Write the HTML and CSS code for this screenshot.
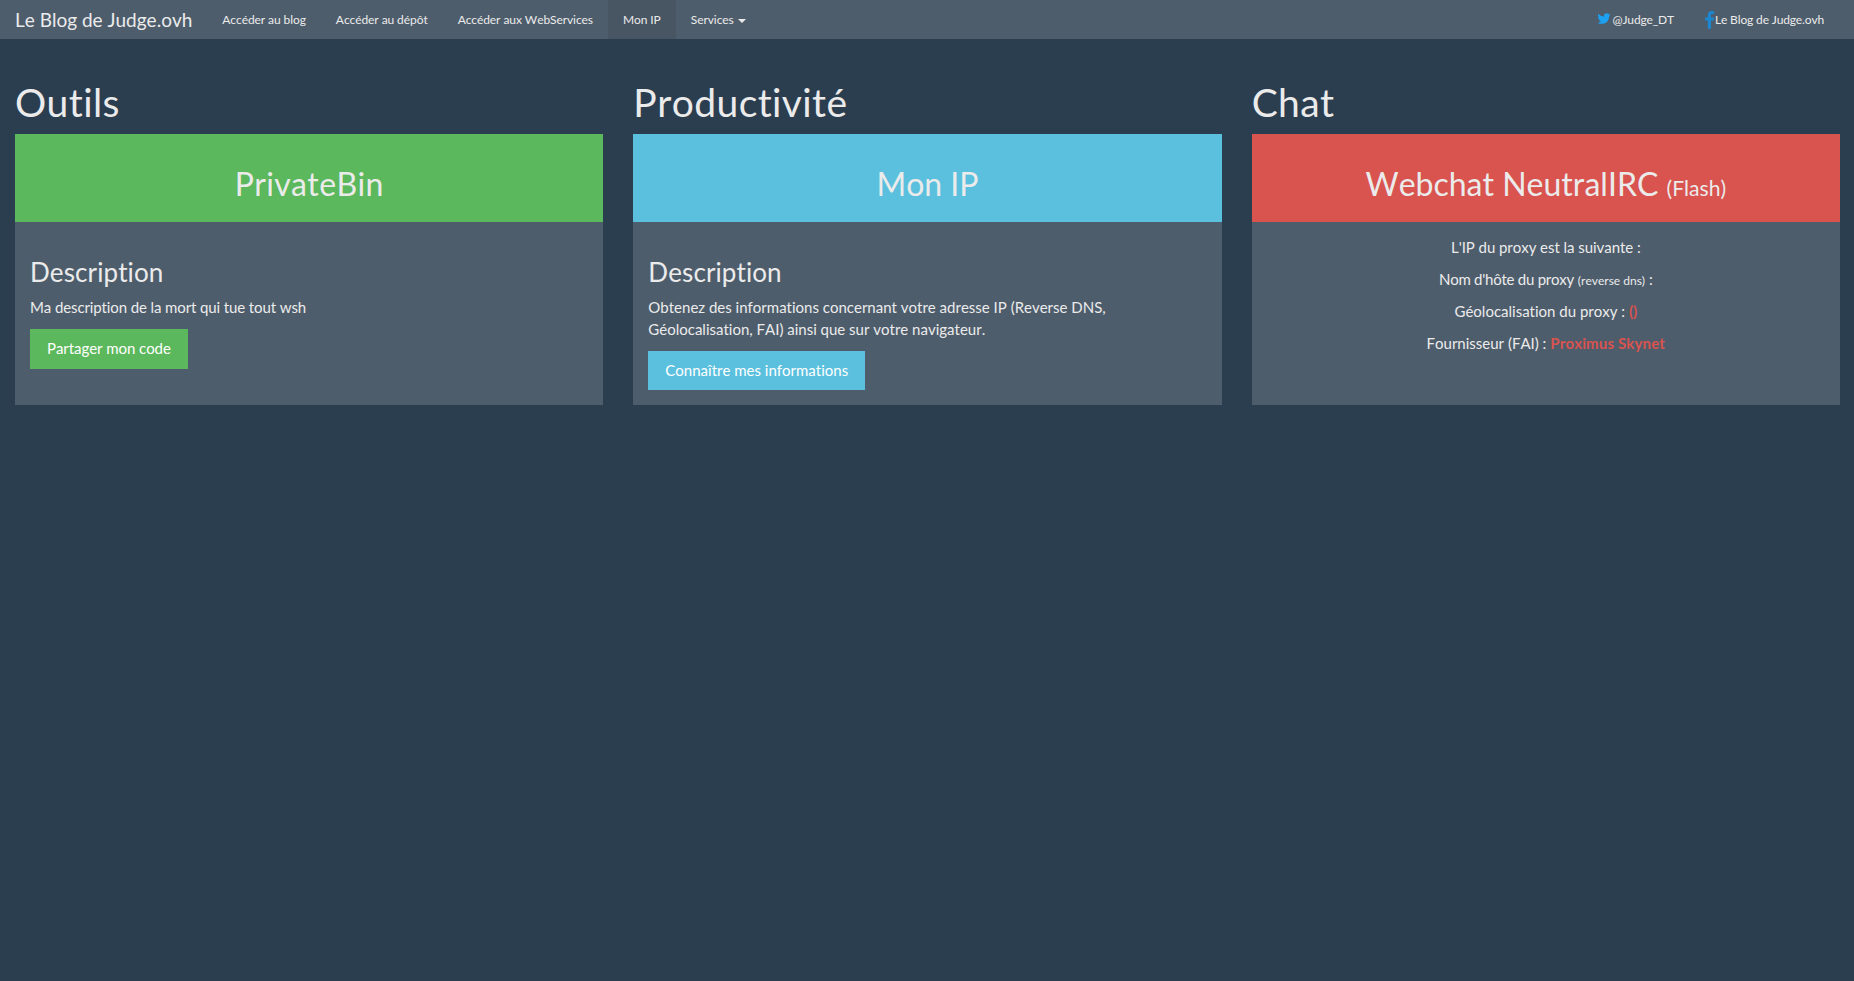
FILE: index.html
```html
<!DOCTYPE html>
<html lang="fr">
<head>
<meta charset="utf-8">
<title>Le Blog de Judge.ovh</title>
<link rel="stylesheet" href="styles.css">
</head>
<body>
<nav class="navbar">
  <a class="brand" href="#">Le Blog de Judge.ovh</a>
  <ul class="nav">
    <li><a href="#">Accéder au blog</a></li>
    <li><a href="#">Accéder au dépôt</a></li>
    <li><a href="#">Accéder aux WebServices</a></li>
    <li class="active"><a href="#">Mon IP</a></li>
    <li><a href="#">Services <span class="caret"></span></a></li>
  </ul>
  <ul class="nav nav-right">
    <li><a href="#"><svg class="icon-tw" viewBox="0 0 1664 1792"><path d="M1620 408q-67 98-162 167 1 14 1 42 0 130-38 259.500t-115.500 248.500-184.500 210.500-258 146-323 54.500q-271 0-496-145 35 4 78 4 225 0 401-138-105-2-188-64.500t-114-159.500q33 5 61 5 43 0 85-11-112-23-185.500-111.500t-73.500-205.500v-4q68 38 146 41-66-44-105-115t-39-154q0-88 44-163 121 149 294.500 238.500t371.500 99.500q-8-38-8-74 0-134 94.500-228.500t228.500-94.500q140 0 236 102 109-21 205-78-37 115-142 178 104-11 200-51z"/></svg><span>@Judge_DT</span></a></li>
    <li><a href="#"><svg class="icon-fb" viewBox="0 0 1024 1792"><path d="M959 12v264h-157q-86 0-116 36t-30 108v189h293l-39 296h-254v759h-306v-759h-255v-296h255v-218q0-186 104-288.500t277-102.500q147 0 228 12z"/></svg><span>Le Blog de Judge.ovh</span></a></li>
  </ul>
</nav>
<main class="row">
  <section class="col">
    <h1>Outils</h1>
    <div class="panel">
      <div class="panel-heading success"><h2 class="spaced">PrivateBin</h2></div>
      <div class="panel-body">
        <h3>Description</h3>
        <p class="tight">Ma description de la mort qui tue tout wsh</p>
        <a class="btn success tight-btn" href="#">Partager mon code</a>
      </div>
    </div>
  </section>
  <section class="col">
    <h1>Productivité</h1>
    <div class="panel">
      <div class="panel-heading info"><h2>Mon IP</h2></div>
      <div class="panel-body">
        <h3>Description</h3>
        <p>Obtenez des informations concernant votre adresse IP (Reverse DNS, Géolocalisation, FAI) ainsi que sur votre navigateur.</p>
        <a class="btn info" href="#">Connaître mes informations</a>
      </div>
    </div>
  </section>
  <section class="col">
    <h1>Chat</h1>
    <div class="panel">
      <div class="panel-heading danger"><h2>Webchat NeutralIRC <small>(Flash)</small></h2></div>
      <div class="panel-body centered">
        <p class="tight-min">L'IP du proxy est la suivante :</p>
        <p><span class="tighter">Nom d'hôte du proxy</span> <small>(reverse dns)</small> :</p>
        <p>Géolocalisation du proxy : <strong class="hl">()</strong></p>
        <p>Fournisseur (FAI) : <strong class="hl wide">Proximus Skynet</strong></p>
      </div>
    </div>
  </section>
</main>
</body>
</html>
```

FILE: styles.css
```css
* { box-sizing: border-box; }
html, body { height: 100%; }
body {
  margin: 0;
  background: #2b3e50;
  color: #ebebeb;
  font-family: Lato, "Helvetica Neue", Arial, sans-serif;
  font-size: 15px;
  line-height: 1.42857143;
  font-variant-ligatures: none;
  font-kerning: none;
}
a { text-decoration: none; color: inherit; }
.navbar {
  display: flex;
  align-items: stretch;
  height: 39px;
  background: #4e5d6c;
  padding: 0 15px;
  margin-bottom: 21px;
}
.brand {
  font-size: 19px;
  line-height: 39px;
  color: #ebebeb;
}
.nav {
  display: flex;
  list-style: none;
  margin: 0 0 0 15px;
  padding: 0;
  font-size: 12px;
  line-height: 39px;
  letter-spacing: -0.08px;
}
.nav li a { display: block; padding: 0 15px; height: 39px; }
.nav .active a { background: #485563; }
.nav-right { margin-left: auto; letter-spacing: -0.15px; }
.nav-right li a { display: flex; align-items: center; }
.caret {
  display: inline-block;
  width: 0;
  height: 0;
  margin-left: 1px;
  vertical-align: middle;
  border-top: 4px solid #ebebeb;
  border-left: 4px solid transparent;
  border-right: 4px solid transparent;
}
.icon-tw { width: 14px; height: 15px; fill: #1da1f2; margin: 0 2px 2px 0; }
.icon-fb { width: 11px; height: 19px; fill: #1b87d0; margin-top: 2px; }
.row { display: flex; gap: 30px; padding: 0 14px 0 15px; }
.col { flex: 1 1 0; min-width: 0; display: flex; flex-direction: column; }
h1, h2, h3 { font-weight: 400; line-height: 1.1; margin: 21px 0 10.5px; color: #ebebeb; }
h1 { font-size: 39px; letter-spacing: 0.4px; }
h2 { font-size: 32px; }
h3 { font-size: 26px; letter-spacing: 0.1px; }
h2 small { font-size: 66%; color: inherit; font-weight: 400; }
small { font-size: 12px; }
.spaced { letter-spacing: 0.35px; }
.panel { flex: 1; background: #4e5d6c; display: flex; flex-direction: column; }
.panel-heading { padding: 11px 15px 0; text-align: center; height: 88px; }
.panel-body { padding: 15px; }
.panel-body p { margin: 0 0 10.5px; }
.tight { letter-spacing: -0.11px; }
.tight-min { letter-spacing: -0.05px; }
.tighter { letter-spacing: -0.25px; }
.tight-btn { letter-spacing: -0.06px; }
.wide { letter-spacing: 0.15px; }
.centered { text-align: center; }
.success { background: #5cb85c; }
.info { background: #5bc0de; }
.danger { background: #d9534f; }
.btn {
  display: inline-block;
  padding: 9px 17px;
  color: #fff;
  font-size: 15px;
  line-height: 1.42857143;
  vertical-align: top;
}
.hl { color: #d9534f; }
strong { font-weight: 700; }
```
